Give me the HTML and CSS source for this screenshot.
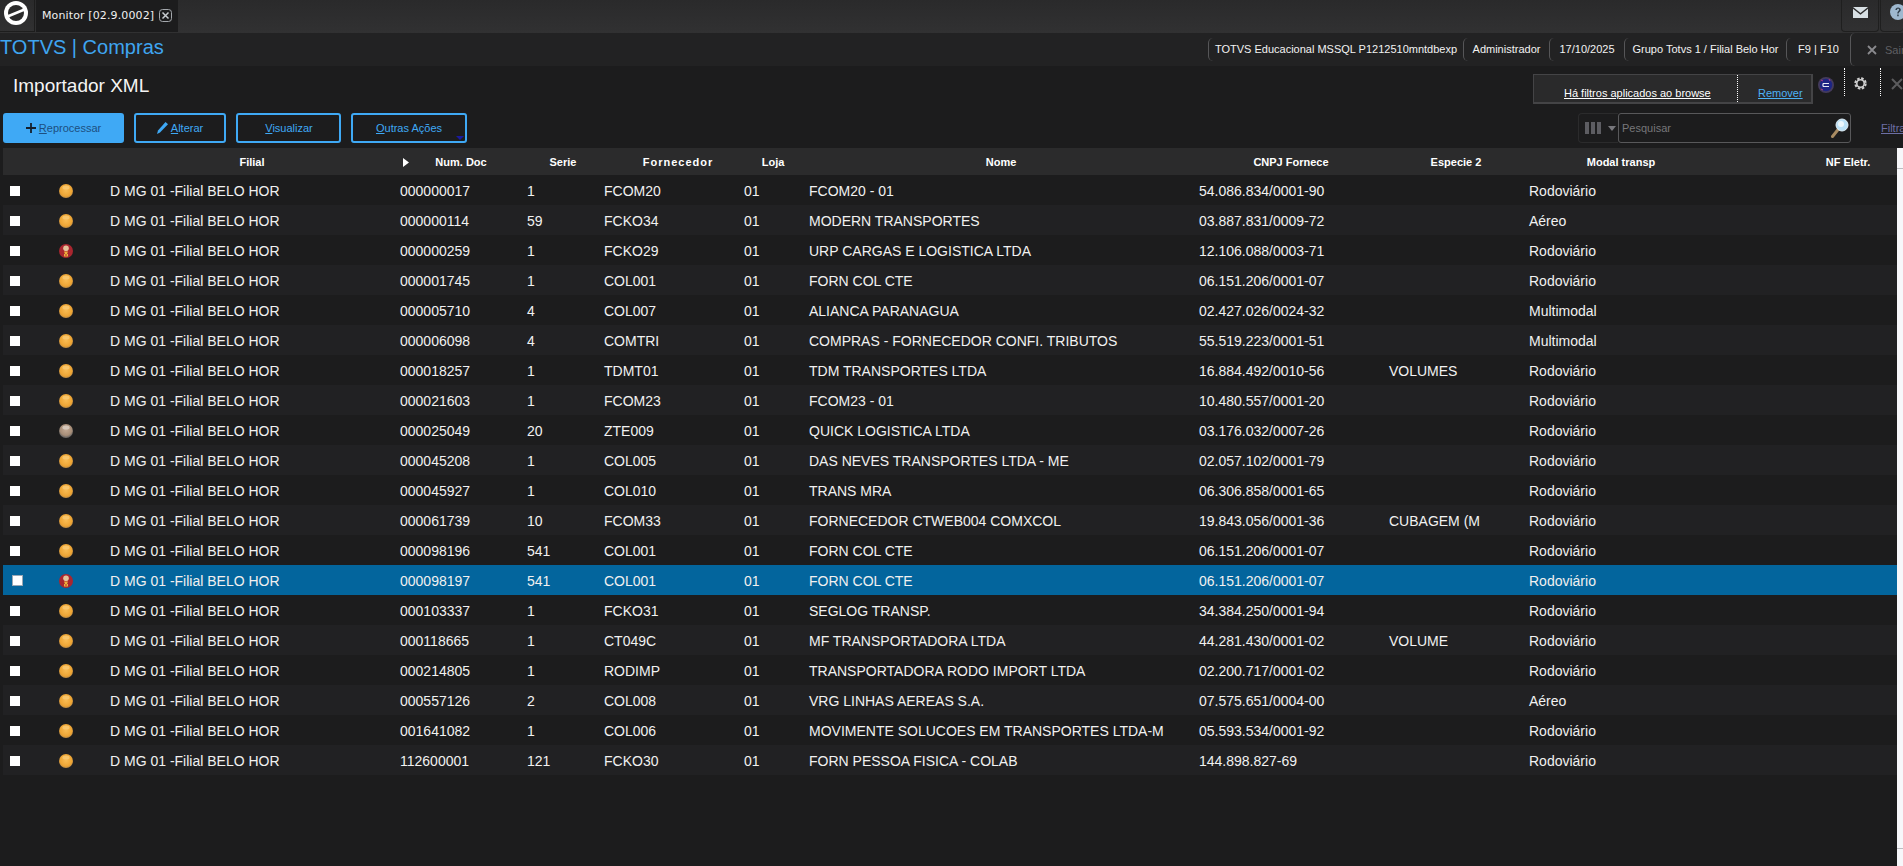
FILE: index.html
```html
<!DOCTYPE html>
<html lang="pt-BR">
<head>
<meta charset="utf-8">
<title>Importador XML</title>
<link rel="stylesheet" href="styles.css">
</head>
<body>
<svg class="defs" aria-hidden="true">
  <defs>
    <radialGradient id="gOrange" cx="50%" cy="45%" r="55%"><stop offset="0" stop-color="#f9bd55"/><stop offset=".75" stop-color="#eea534"/><stop offset="1" stop-color="#b98a45"/></radialGradient>
    <radialGradient id="gGray" cx="50%" cy="40%" r="55%"><stop offset="0" stop-color="#c4ab96"/><stop offset=".75" stop-color="#a68d78"/><stop offset="1" stop-color="#6f6a66"/></radialGradient>
    <symbol id="ball" viewBox="0 0 14 14"><circle cx="7" cy="7" r="7" fill="url(#gOrange)"/><ellipse cx="7" cy="3.4" rx="3.6" ry="2" fill="#fbd07f" opacity=".7"/></symbol>
    <symbol id="ballg" viewBox="0 0 14 14"><circle cx="7" cy="7" r="7" fill="url(#gGray)"/><ellipse cx="7" cy="3.4" rx="3.6" ry="2" fill="#ddd2c8" opacity=".8"/></symbol>
    <symbol id="ballr" viewBox="0 0 14 14"><circle cx="7" cy="7" r="7" fill="#a9262f"/><circle cx="7" cy="4.2" r="2.8" fill="#e4c49c"/><path d="M5 7.6h4L8 10h1v2.4H5V10h1z" fill="#eeb23c"/><circle cx="7" cy="11" r=".8" fill="#a9262f"/></symbol>
  </defs>
</svg>

<header class="topbar">
  <div class="logo-tile">
    <svg class="logo" viewBox="0 0 24 24"><circle cx="12" cy="12" r="12" fill="#fff"/><circle cx="12" cy="12" r="8" fill="#2b2b2b"/><path d="M3.500 15.500L20.500 8.500" stroke="#fff" stroke-width="2.600"/></svg>
  </div>
  <div class="tab">
    <span class="tab-label">Monitor [02.9.0002]</span>
    <svg class="tab-close" viewBox="0 0 13 13"><rect x=".5" y=".5" width="12" height="12" rx="3" fill="none" stroke="#a4a8ad"/><path d="M3.500 3.500l6 6m0-6l-6 6" stroke="#c8ccd0" stroke-width="1.500"/></svg>
  </div>
  <div class="top-spacer"></div>
  <div class="top-tile mail">
    <svg class="mail-icon" viewBox="0 0 15 11"><path d="M0 0h15L7.500 6z" fill="#d8e0e4"/><path d="M0 1.800v9.200h15V1.800L7.500 7.800z" fill="#d8e0e4"/></svg>
  </div>
  <div class="top-tile help">
    <svg class="help-icon" viewBox="0 0 16 16"><circle cx="8" cy="8" r="8" fill="#9fb8cf"/><path d="M5.400 6c0-1.600 1.100-2.600 2.700-2.600S10.800 4.300 10.800 5.800c0 2-2.100 2-2.100 3.800H7.200c0-2.500 1.900-2.700 1.900-3.900 0-.6-.4-1-1-1S7 5.200 7 6zM7.200 10.600h1.500v1.700H7.200z" fill="#33404c"/></svg>
  </div>
</header>

<nav class="appbar">
  <div class="app-title">TOTVS | Compras</div>
  <div class="app-info">
    <div class="info w-env">TOTVS Educacional MSSQL P1212510mntdbexp</div>
    <div class="info w-user">Administrador</div>
    <div class="info w-date">17/10/2025</div>
    <div class="info w-group">Grupo Totvs 1 / Filial Belo Hor</div>
    <div class="info w-keys">F9 | F10</div>
    <div class="info-exit">
      <svg class="exit-x" viewBox="0 0 10 10"><path d="M1 1l8 8m0-8l-8 8" stroke="#8a8a8e" stroke-width="1.800"/></svg>
      <span>Sair</span>
    </div>
  </div>
</nav>

<section class="heading">
  <h1 class="page-title">Importador XML</h1>
  <div class="heading-tools">
    <div class="filter-box">
      <a class="filter-msg">Há filtros aplicados ao browse</a>
      <a class="filter-remove">Remover</a>
    </div>
    <svg class="orb" viewBox="0 0 16 16"><circle cx="8" cy="8" r="8" fill="#443b5c"/><circle cx="8" cy="8" r="6.200" fill="#1d2584"/><path d="M3 3l2 1M11 2l1 2M3 12l2 1" stroke="#b13a8a"/><path d="M5 6.500h6M5 9.500h6M5 6.500v3" stroke="#e8e8f4" stroke-width="1.200" fill="none"/></svg>
    <div class="tool-cell">
      <svg class="gear" viewBox="0 0 16 16"><circle cx="8" cy="8" r="4.600" fill="none" stroke="#cfcfcf" stroke-width="2"/><circle cx="8" cy="8" r="6.300" fill="none" stroke="#cfcfcf" stroke-width="2.600" stroke-dasharray="3.100 1.850"/></svg>
    </div>
    <div class="tool-cell tool-close">
      <svg class="close-x" viewBox="0 0 12 12"><path d="M1 1l10 10m0-10L1 11" stroke="#5c5c5e" stroke-width="2"/></svg>
    </div>
  </div>
</section>

<section class="toolbar">
  <button class="btn btn-primary w-rep"><svg class="plus" viewBox="0 0 10 10"><path d="M5 0v10M0 5h10" stroke="#14202c" stroke-width="1.800"/></svg><span><u>R</u>eprocessar</span></button>
  <button class="btn w-alt"><svg class="pencil" viewBox="0 0 11 12"><path d="M0 12l1-3.500L8.500 0 11 2.300 3 10.500z" fill="#3fa9f5"/></svg><span><u>A</u>lterar</span></button>
  <button class="btn w-vis"><span><u>V</u>isualizar</span></button>
  <button class="btn w-out"><span><u>O</u>utras Ações</span><i class="caret"></i></button>
  <div class="toolbar-spacer"></div>
  <div class="col-picker">
    <span class="col-bars"><i></i><i></i><i></i></span>
    <i class="col-caret"></i>
  </div>
  <div class="search">
    <span>Pesquisar</span>
    <svg class="magnifier" viewBox="0 0 18 20"><path d="M1.500 18.500L7.500 11" stroke="#a78a61" stroke-width="3" stroke-linecap="round"/><circle cx="11" cy="7" r="6" fill="#b9e0f6" stroke="#dfeef7"/><circle cx="10" cy="6" r="3" fill="#fff" opacity=".7"/></svg>
  </div>
  <a class="filter-link">Filtrar</a>
</section>

<main class="browse">
  <div class="table">
    <div class="thead">
      <div class="th">Filial</div>
      <div class="th"><svg class="sort" viewBox="0 0 6 9"><path d="M0 0l6 4.500L0 9z" fill="#fff"/></svg></div>
      <div class="th">Num. Doc</div>
      <div class="th">Serie</div>
      <div class="th th-wide">Fornecedor</div>
      <div class="th">Loja</div>
      <div class="th">Nome</div>
      <div class="th">CNPJ Fornece</div>
      <div class="th">Especie 2</div>
      <div class="th">Modal transp</div>
      <div class="th"></div>
      <div class="th">NF Eletr.</div>
    </div>
    <div class="tbody">
      <div class="tr"><span class="chk"></span><svg class="st"><use href="#ball"/></svg><span>D MG 01 -Filial BELO HOR</span><span>000000017</span><span>1</span><span>FCOM20</span><span>01</span><span>FCOM20 - 01</span><span>54.086.834/0001-90</span><span></span><span>Rodoviário</span></div>
      <div class="tr"><span class="chk"></span><svg class="st"><use href="#ball"/></svg><span>D MG 01 -Filial BELO HOR</span><span>000000114</span><span>59</span><span>FCKO34</span><span>01</span><span>MODERN TRANSPORTES</span><span>03.887.831/0009-72</span><span></span><span>Aéreo</span></div>
      <div class="tr"><span class="chk"></span><svg class="st"><use href="#ballr"/></svg><span>D MG 01 -Filial BELO HOR</span><span>000000259</span><span>1</span><span>FCKO29</span><span>01</span><span>URP CARGAS E LOGISTICA LTDA</span><span>12.106.088/0003-71</span><span></span><span>Rodoviário</span></div>
      <div class="tr"><span class="chk"></span><svg class="st"><use href="#ball"/></svg><span>D MG 01 -Filial BELO HOR</span><span>000001745</span><span>1</span><span>COL001</span><span>01</span><span>FORN COL CTE</span><span>06.151.206/0001-07</span><span></span><span>Rodoviário</span></div>
      <div class="tr"><span class="chk"></span><svg class="st"><use href="#ball"/></svg><span>D MG 01 -Filial BELO HOR</span><span>000005710</span><span>4</span><span>COL007</span><span>01</span><span>ALIANCA PARANAGUA</span><span>02.427.026/0024-32</span><span></span><span>Multimodal</span></div>
      <div class="tr"><span class="chk"></span><svg class="st"><use href="#ball"/></svg><span>D MG 01 -Filial BELO HOR</span><span>000006098</span><span>4</span><span>COMTRI</span><span>01</span><span>COMPRAS - FORNECEDOR CONFI. TRIBUTOS</span><span>55.519.223/0001-51</span><span></span><span>Multimodal</span></div>
      <div class="tr"><span class="chk"></span><svg class="st"><use href="#ball"/></svg><span>D MG 01 -Filial BELO HOR</span><span>000018257</span><span>1</span><span>TDMT01</span><span>01</span><span>TDM TRANSPORTES LTDA</span><span>16.884.492/0010-56</span><span>VOLUMES</span><span>Rodoviário</span></div>
      <div class="tr"><span class="chk"></span><svg class="st"><use href="#ball"/></svg><span>D MG 01 -Filial BELO HOR</span><span>000021603</span><span>1</span><span>FCOM23</span><span>01</span><span>FCOM23 - 01</span><span>10.480.557/0001-20</span><span></span><span>Rodoviário</span></div>
      <div class="tr"><span class="chk"></span><svg class="st"><use href="#ballg"/></svg><span>D MG 01 -Filial BELO HOR</span><span>000025049</span><span>20</span><span>ZTE009</span><span>01</span><span>QUICK LOGISTICA LTDA</span><span>03.176.032/0007-26</span><span></span><span>Rodoviário</span></div>
      <div class="tr"><span class="chk"></span><svg class="st"><use href="#ball"/></svg><span>D MG 01 -Filial BELO HOR</span><span>000045208</span><span>1</span><span>COL005</span><span>01</span><span>DAS NEVES TRANSPORTES LTDA - ME</span><span>02.057.102/0001-79</span><span></span><span>Rodoviário</span></div>
      <div class="tr"><span class="chk"></span><svg class="st"><use href="#ball"/></svg><span>D MG 01 -Filial BELO HOR</span><span>000045927</span><span>1</span><span>COL010</span><span>01</span><span>TRANS MRA</span><span>06.306.858/0001-65</span><span></span><span>Rodoviário</span></div>
      <div class="tr"><span class="chk"></span><svg class="st"><use href="#ball"/></svg><span>D MG 01 -Filial BELO HOR</span><span>000061739</span><span>10</span><span>FCOM33</span><span>01</span><span>FORNECEDOR CTWEB004 COMXCOL</span><span>19.843.056/0001-36</span><span>CUBAGEM (M</span><span>Rodoviário</span></div>
      <div class="tr"><span class="chk"></span><svg class="st"><use href="#ball"/></svg><span>D MG 01 -Filial BELO HOR</span><span>000098196</span><span>541</span><span>COL001</span><span>01</span><span>FORN COL CTE</span><span>06.151.206/0001-07</span><span></span><span>Rodoviário</span></div>
      <div class="tr selected"><span class="chk"></span><svg class="st"><use href="#ballr"/></svg><span>D MG 01 -Filial BELO HOR</span><span>000098197</span><span>541</span><span>COL001</span><span>01</span><span>FORN COL CTE</span><span>06.151.206/0001-07</span><span></span><span>Rodoviário</span></div>
      <div class="tr"><span class="chk"></span><svg class="st"><use href="#ball"/></svg><span>D MG 01 -Filial BELO HOR</span><span>000103337</span><span>1</span><span>FCKO31</span><span>01</span><span>SEGLOG TRANSP.</span><span>34.384.250/0001-94</span><span></span><span>Rodoviário</span></div>
      <div class="tr"><span class="chk"></span><svg class="st"><use href="#ball"/></svg><span>D MG 01 -Filial BELO HOR</span><span>000118665</span><span>1</span><span>CT049C</span><span>01</span><span>MF TRANSPORTADORA LTDA</span><span>44.281.430/0001-02</span><span>VOLUME</span><span>Rodoviário</span></div>
      <div class="tr"><span class="chk"></span><svg class="st"><use href="#ball"/></svg><span>D MG 01 -Filial BELO HOR</span><span>000214805</span><span>1</span><span>RODIMP</span><span>01</span><span>TRANSPORTADORA RODO IMPORT LTDA</span><span>02.200.717/0001-02</span><span></span><span>Rodoviário</span></div>
      <div class="tr"><span class="chk"></span><svg class="st"><use href="#ball"/></svg><span>D MG 01 -Filial BELO HOR</span><span>000557126</span><span>2</span><span>COL008</span><span>01</span><span>VRG LINHAS AEREAS S.A.</span><span>07.575.651/0004-00</span><span></span><span>Aéreo</span></div>
      <div class="tr"><span class="chk"></span><svg class="st"><use href="#ball"/></svg><span>D MG 01 -Filial BELO HOR</span><span>001641082</span><span>1</span><span>COL006</span><span>01</span><span>MOVIMENTE SOLUCOES EM TRANSPORTES LTDA-M</span><span>05.593.534/0001-92</span><span></span><span>Rodoviário</span></div>
      <div class="tr"><span class="chk"></span><svg class="st"><use href="#ball"/></svg><span>D MG 01 -Filial BELO HOR</span><span>112600001</span><span>121</span><span>FCKO30</span><span>01</span><span>FORN PESSOA FISICA - COLAB</span><span>144.898.827-69</span><span></span><span>Rodoviário</span></div>
    </div>
  </div>
  <div class="scrollbar">
    <div class="sb-btn"></div>
    <div class="sb-track"></div>
    <div class="sb-btn"></div>
  </div>
</main>
</body>
</html>
```

FILE: styles.css
```css
* { box-sizing: border-box; }
html, body { height: 100%; }
body {
  margin: 0;
  width: 1903px;
  height: 866px;
  overflow: hidden;
  background: #1c1c1d;
  color: #f0f0f0;
  font-family: "Liberation Sans", Arial, sans-serif;
  display: flex;
  flex-direction: column;
}
.defs { width: 0; height: 0; display: block; flex: none; }

/* top bar */
.topbar {
  height: 33px;
  flex: none;
  display: flex;
  background: linear-gradient(#2a2a2b, #313132);
}
.logo-tile {
  width: 35px;
  height: 32px;
  display: flex;
  padding: 1px 0 0 4px;
  border-right: 1px solid #1d1d1d;
  border-bottom: 1px solid #1d1d1d;
}
.logo { width: 24px; height: 24px; }
.tab {
  width: 142px;
  height: 32px;
  margin-left: 1px;
  display: flex;
  align-items: center;
  padding: 0 0 2px 6px;
  gap: 5px;
  background: #1c1c1d;
}
.tab-label { font: 11px "DejaVu Sans", sans-serif; letter-spacing: .12px; color: #f0f0f0; white-space: nowrap; }
.tab-close { width: 13px; height: 13px; flex: none; }
.top-spacer { flex: 1; }
.top-tile {
  height: 32px;
  display: flex;
  align-items: center;
  border: 1px solid #1f1f1f;
  border-top: 0;
  border-radius: 0 0 4px 4px;
}
.mail { width: 38px; margin-right: 1px; justify-content: center; padding-bottom: 7px; }
.mail-icon { width: 15px; height: 11px; }
.help { width: 23px; padding: 0 0 7px 9px; border-right: 0; }
.help-icon { width: 16px; height: 16px; flex: none; }

/* application bar */
.appbar {
  height: 33px;
  flex: none;
  display: flex;
  align-items: center;
  justify-content: space-between;
  background: #222223;
}
.app-title { font-size: 20px; color: #3fa5f0; padding-bottom: 4px; white-space: nowrap; }
.app-info { display: flex; height: 100%; align-items: center; font-size: 11px; color: #f2f2f2; }
.info {
  height: 23px;
  line-height: 23px;
  text-align: center;
  white-space: nowrap;
  border-left: 1px solid #565658;
  border-radius: 5px 0 0 5px;
}
.w-env { width: 255px; }
.w-user { width: 86px; }
.w-date { width: 75px; }
.w-group { width: 162px; }
.w-keys { width: 64px; }
.info-exit {
  width: 53px;
  height: 33px;
  display: flex;
  align-items: center;
  gap: 8px;
  padding-left: 16px;
  border-left: 1px solid #565658;
  border-radius: 5px 0 0 5px;
  color: #5f5f62;
  white-space: nowrap;
}
.exit-x { width: 10px; height: 10px; flex: none; }

/* page heading */
.heading {
  height: 47px;
  flex: none;
  display: flex;
  justify-content: space-between;
}
.page-title { margin: 0; padding: 9px 0 0 13px; font-size: 19px; font-weight: 400; color: #f4f4f4; line-height: 22px; }
.heading-tools { display: flex; align-items: flex-start; }
.filter-box {
  width: 280px;
  height: 30px;
  margin-top: 8px;
  display: flex;
  align-items: flex-end;
  background: #2a2a2b;
  border: 2px solid #444446;
  border-width: 1px 2px 2px 1px;
  font-size: 11px;
}
.filter-msg { width: 204px; padding: 0 0 3px 30px; color: #fff; text-decoration: underline; border-right: 1px dotted #fff; height: 100%; display: flex; align-items: flex-end; }
.filter-remove { padding: 0 0 3px 20px; color: #4db1f5; text-decoration: underline; }
.orb { width: 16px; height: 16px; margin: 11px 0 0 5px; flex: none; }
.tool-cell {
  width: 36px;
  height: 28px;
  margin-top: 2px;
  border-left: 1px dotted #fff;
  display: flex;
  align-items: center;
  padding-left: 9px;
  flex: none;
}
.orb + .tool-cell { margin-left: 10px; }
.gear { width: 13px; height: 13px; margin-top: 3px; }
.tool-close { width: 23px; }
.close-x { width: 12px; height: 12px; flex: none; margin-top: 4px; margin-left: 1px; }

/* toolbar */
.toolbar {
  height: 30px;
  flex: none;
  display: flex;
  align-items: stretch;
  padding-left: 3px;
  gap: 10px;
  font-size: 11px;
}
.btn {
  position: relative;
  display: flex;
  align-items: center;
  justify-content: center;
  gap: 3px;
  padding: 0;
  font: 11px "Liberation Sans", Arial, sans-serif;
  color: #3fa9f5;
  background: transparent;
  border: 2px solid #3fa9f5;
  border-radius: 3px;
}
.btn-primary { background: #3fa9f5; color: #1d4f80; }
.w-rep { width: 121px; }
.w-alt { width: 92px; }
.w-vis { width: 105px; padding-left: 1px; }
.w-out { width: 116px; }
.plus { width: 10px; height: 10px; }
.pencil { width: 11px; height: 12px; }
.caret {
  position: absolute;
  right: 1px;
  bottom: 1px;
  border: 4px solid transparent;
  border-top: 4px solid #1a1aa0;
  border-bottom-width: 0;
}
.toolbar-spacer { flex: 1; }
.col-picker {
  width: 40px;
  margin-right: -10px;
  display: flex;
  align-items: center;
  gap: 7px;
  padding-left: 6px;
  border: 1px solid #2b2b2c;
  border-right: 0;
  border-radius: 4px 0 0 4px;
}
.col-bars { display: flex; gap: 2px; }
.col-bars i { width: 4px; height: 12px; background: #5d5d62; }
.col-caret { border: 4px solid transparent; border-top: 5px solid #77777c; border-bottom-width: 0; }
.search {
  width: 233px;
  display: flex;
  align-items: center;
  justify-content: space-between;
  padding: 0 1px 0 3px;
  font-size: 11px;
  color: #77777a;
  border: 1px solid #58585a;
  border-radius: 3px;
  margin-right: 20px;
}
.magnifier { width: 18px; height: 20px; }
.filter-link { width: 22px; color: #6d6fa5; text-decoration: underline; line-height: 30px; white-space: nowrap; }

/* browse */
.browse { flex: 1; min-height: 0; margin-top: 5px; display: flex; }
.table { flex: 1; min-width: 0; margin-left: 3px; }
.thead {
  height: 27px;
  display: grid;
  grid-template-columns: 296px 12px 98px 106px 124px 66px 390px 190px 140px 190px 84px 96px;
  padding-left: 101px;
  align-items: center;
  background: #2b2b2c;
}
.th { font-size: 11px; font-weight: 700; color: #fff; text-align: center; white-space: nowrap; }
.th-wide { letter-spacing: 1px; }
.sort { width: 6px; height: 9px; display: block; margin: 1px auto 0; }
.tr {
  height: 30px;
  padding-top: 1px;
  display: grid;
  grid-template-columns: 42px 55px 290px 127px 77px 140px 65px 390px 190px 140px 1fr;
  align-items: center;
  font-size: 14px;
  color: #f1f1f1;
  white-space: nowrap;
}
.tr:nth-child(even) { background: #212123; }
.tr.selected { background: #03659d; }
.tr > span { padding-left: 10px; }
.tr > .chk {
  width: 10px;
  height: 10px;
  padding: 0;
  margin-left: 7px;
  background: #fff;
}
.tr.selected > .chk {
  width: 11px;
  height: 11px;
  margin-left: 9px;
  border: 1px solid #9aa7b3;
}
.st { width: 14px; height: 14px; margin-left: 14px; display: block; }
.scrollbar { width: 6px; flex: none; display: flex; flex-direction: column; background: #f7f7fa; }
.sb-btn { height: 20px; flex: none; }
.sb-track { flex: 1; border-top: 1px solid #bdbdc2; border-bottom: 1px solid #bdbdc2; }
.sb-btn:last-child { height: 17px; }
```
